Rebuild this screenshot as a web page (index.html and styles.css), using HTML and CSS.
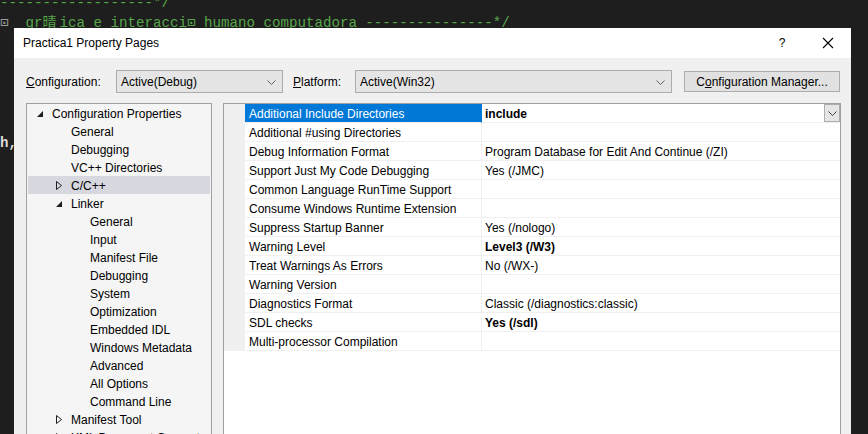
FILE: index.html
```html
<!DOCTYPE html>
<html>
<head>
<meta charset="utf-8">
<link rel="stylesheet" href="styles.css">
</head>
<body>
<div class="code">
  <div class="line comment">------------------*/</div>
  <div class="line comment"><span class="box">⊡</span>  gr<span class="cjk">晴</span>ica e interacci⊡ humano computadora ---------------*/</div>
  <div class="line"></div>
  <div class="line"></div>
  <div class="line"></div>
  <div class="line"></div>
  <div class="line"></div>
  <div class="line"></div>
  <div class="line plain">h,</div>
</div>

<div class="dialog">
  <div class="titlebar">
    <span class="title">Practica1 Property Pages</span>
    <span class="tb-btn help">?</span>
    <span class="tb-btn close"><svg width="12" height="12" viewBox="0 0 12 12"><path d="M1 1L11 11M11 1L1 11" stroke="#000" stroke-width="1.1" fill="none"/></svg></span>
  </div>
  <div class="body">
    <div class="config-row">
      <span class="lbl lbl-config"><u>C</u>onfiguration:</span>
      <div class="select sel-config"><span>Active(Debug)</span><svg class="chev" width="9" height="5" viewBox="0 0 9 5"><path d="M0.5 0.5L4.5 4.5L8.5 0.5" stroke="#606060" fill="none"/></svg></div>
      <span class="lbl lbl-plat"><u>P</u>latform:</span>
      <div class="select sel-plat"><span>Active(Win32)</span><svg class="chev" width="9" height="5" viewBox="0 0 9 5"><path d="M0.5 0.5L4.5 4.5L8.5 0.5" stroke="#606060" fill="none"/></svg></div>
      <div class="btn">C<u>o</u>nfiguration Manager...</div>
    </div>
    <div class="panes">
      <div class="tree">
        <div class="node lv0"><span class="arr"><svg width="6" height="6" viewBox="0 0 6 6"><path d="M6 0L6 6L0 6Z" fill="#1e1e1e"/></svg></span>Configuration Properties</div>
        <div class="node lv1"><span class="arr"></span>General</div>
        <div class="node lv1"><span class="arr"></span>Debugging</div>
        <div class="node lv1"><span class="arr"></span>VC++ Directories</div>
        <div class="node lv1 sel"><span class="arr"><svg width="6" height="9" viewBox="0 0 6 9"><path d="M0.5 0.5L5.5 4.5L0.5 8.5Z" stroke="#1e1e1e" stroke-width="1" fill="none"/></svg></span>C/C++</div>
        <div class="node lv1"><span class="arr"><svg width="6" height="6" viewBox="0 0 6 6"><path d="M6 0L6 6L0 6Z" fill="#1e1e1e"/></svg></span>Linker</div>
        <div class="node lv2"><span class="arr"></span>General</div>
        <div class="node lv2"><span class="arr"></span>Input</div>
        <div class="node lv2"><span class="arr"></span>Manifest File</div>
        <div class="node lv2"><span class="arr"></span>Debugging</div>
        <div class="node lv2"><span class="arr"></span>System</div>
        <div class="node lv2"><span class="arr"></span>Optimization</div>
        <div class="node lv2"><span class="arr"></span>Embedded IDL</div>
        <div class="node lv2"><span class="arr"></span>Windows Metadata</div>
        <div class="node lv2"><span class="arr"></span>Advanced</div>
        <div class="node lv2"><span class="arr"></span>All Options</div>
        <div class="node lv2"><span class="arr"></span>Command Line</div>
        <div class="node lv1"><span class="arr"><svg width="6" height="9" viewBox="0 0 6 9"><path d="M0.5 0.5L5.5 4.5L0.5 8.5Z" stroke="#1e1e1e" stroke-width="1" fill="none"/></svg></span>Manifest Tool</div>
        <div class="node lv1"><span class="arr"><svg width="6" height="9" viewBox="0 0 6 9"><path d="M0.5 0.5L5.5 4.5L0.5 8.5Z" stroke="#1e1e1e" stroke-width="1" fill="none"/></svg></span>XML Document Generator</div>
      </div>
      <div class="grid">
        <div class="row selected"><span class="margin"></span><span class="name">Additional Include Directories</span><span class="value"><b>include</b><span class="dd"><svg width="9" height="5" viewBox="0 0 9 5"><path d="M0.5 0.5L4.5 4.5L8.5 0.5" stroke="#404040" fill="none"/></svg></span></span></div>
        <div class="row"><span class="margin"></span><span class="name">Additional #using Directories</span><span class="value"></span></div>
        <div class="row"><span class="margin"></span><span class="name">Debug Information Format</span><span class="value">Program Database for Edit And Continue (/ZI)</span></div>
        <div class="row"><span class="margin"></span><span class="name">Support Just My Code Debugging</span><span class="value">Yes (/JMC)</span></div>
        <div class="row"><span class="margin"></span><span class="name">Common Language RunTime Support</span><span class="value"></span></div>
        <div class="row"><span class="margin"></span><span class="name">Consume Windows Runtime Extension</span><span class="value"></span></div>
        <div class="row"><span class="margin"></span><span class="name">Suppress Startup Banner</span><span class="value">Yes (/nologo)</span></div>
        <div class="row"><span class="margin"></span><span class="name">Warning Level</span><span class="value"><b>Level3 (/W3)</b></span></div>
        <div class="row"><span class="margin"></span><span class="name">Treat Warnings As Errors</span><span class="value">No (/WX-)</span></div>
        <div class="row"><span class="margin"></span><span class="name">Warning Version</span><span class="value"></span></div>
        <div class="row"><span class="margin"></span><span class="name">Diagnostics Format</span><span class="value">Classic (/diagnostics:classic)</span></div>
        <div class="row"><span class="margin"></span><span class="name">SDL checks</span><span class="value"><b>Yes (/sdl)</b></span></div>
        <div class="row"><span class="margin"></span><span class="name">Multi-processor Compilation</span><span class="value"></span></div>
      </div>
    </div>
  </div>
</div>
</body>
</html>
```
FILE: styles.css
```css
html, body {
  margin: 0;
  padding: 0;
}
body {
  width: 868px;
  height: 434px;
  overflow: hidden;
  background: #1e1e1e;
  position: relative;
}
.code {
  font-family: "Liberation Mono", "DejaVu Sans Mono", monospace;
  font-size: 14.17px;
  margin-top: -5px;
}
.line {
  height: 17.5px;
  line-height: 17.5px;
  white-space: pre;
}
.comment { color: #57a64a; }
.box { color: #9a9a9a; }
.cjk {
  display: inline-block;
  width: 17px;
  font-family: "Noto Sans CJK SC", sans-serif;
  font-size: 14px;
}
.plain { color: #dcdcdc; font-weight: bold; }

.dialog {
  position: absolute;
  left: 14px;
  top: 28px;
  width: 837px;
  height: 420px;
  background: #f0f0f0;
  font-family: "Liberation Sans", Arial, sans-serif;
  font-size: 12px;
  color: #000;
  display: flex;
  flex-direction: column;
  overflow: hidden;
}
.titlebar {
  height: 30px;
  flex: none;
  background: #fff;
  display: flex;
  align-items: center;
  padding-left: 9px;
}
.title { flex: 1; font-size: 12px; }
.tb-btn {
  width: 46px;
  height: 30px;
  display: flex;
  align-items: center;
  justify-content: center;
}
.help { font-size: 12px; }
.body {
  flex: 1;
  padding: 12px 10px 0 12px;
  display: flex;
  flex-direction: column;
}
.config-row {
  display: flex;
  align-items: center;
  height: 23px;
}
.lbl { flex: none; padding-top: 1px; }
.lbl-config { width: 90px; }
.lbl-plat { width: 62px; margin-left: 10px; }
.select {
  flex: none;
  box-sizing: border-box;
  height: 23px;
  background: #e5e5e5;
  border: 1px solid #acacac;
  display: flex;
  align-items: center;
  padding: 1px 6px 0 4px;
}
.select span { flex: 1; }
.sel-config { width: 167px; }
.sel-plat { width: 317px; }
.btn {
  flex: none;
  box-sizing: border-box;
  width: 156px;
  height: 21px;
  margin-left: 12px;
  background: #e1e1e1;
  border: 1px solid #adadad;
  display: flex;
  align-items: center;
  justify-content: center;
  padding-top: 1px;
}
.panes {
  margin-top: 10px;
  display: flex;
  gap: 11px;
  flex: 1;
}
.tree {
  box-sizing: border-box;
  width: 186px;
  flex: none;
  background: #f5f5f5;
  border: 1px solid #a0a0a0;
  border-bottom: none;
}
.node {
  box-sizing: border-box;
  height: 18px;
  padding-top: 1px;
  display: flex;
  align-items: center;
  white-space: nowrap;
  margin: 0 1px;
}
.node.sel { background: #d6d7df; }
.arr {
  width: 19px;
  flex: none;
  display: flex;
  align-items: center;
  padding-left: 4px;
  box-sizing: border-box;
}
.lv0 { padding-left: 5px; }
.lv1 { padding-left: 24px; }
.lv2 { padding-left: 43px; }
.grid {
  flex: 1;
  box-sizing: border-box;
  background: #fff;
  border: 1px solid #a0a0a0;
  border-bottom: none;
}
.row {
  display: flex;
  height: 19px;
}
.margin {
  width: 21px;
  flex: none;
  background: #f0f0f0;
}
.name, .value {
  box-sizing: border-box;
  height: 19px;
  border-bottom: 1px solid #f0f0f0;
  display: flex;
  align-items: center;
  white-space: nowrap;
  padding-top: 1px;
}
.name {
  width: 237px;
  flex: none;
  padding-left: 4px;
  border-right: 1px solid #f0f0f0;
}
.value {
  flex: 1;
  padding-left: 3px;
}
.selected .name {
  background: #0078d7;
  color: #fff;
  border-right-color: #0078d7;
}
.value b { font-weight: bold; }
.dd {
  margin-left: auto;
  box-sizing: border-box;
  width: 16px;
  height: 18px;
  align-self: flex-start;
  margin-top: -1px;
  background: #e5e5e5;
  border: 1px solid #acacac;
  display: flex;
  align-items: center;
  justify-content: center;
}
```
